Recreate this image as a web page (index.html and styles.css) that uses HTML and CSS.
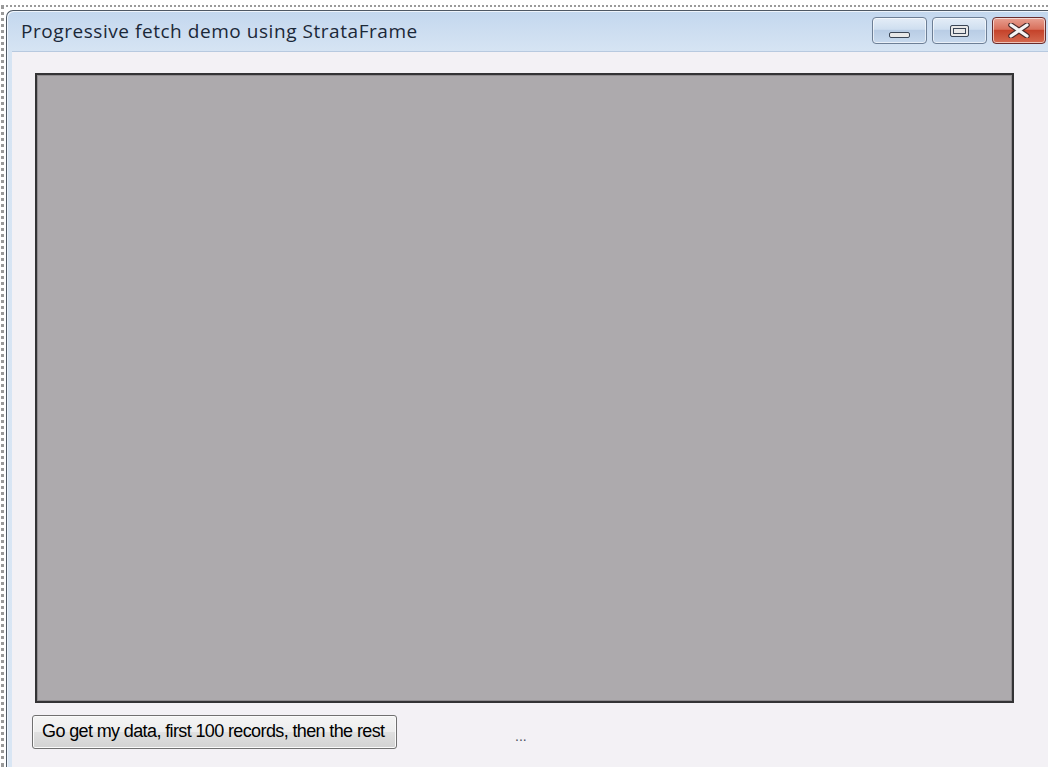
FILE: index.html
```html
<!DOCTYPE html>
<html>
<head>
<meta charset="utf-8">
<title>Progressive fetch demo using StrataFrame</title>
<link rel="stylesheet" href="styles.css">
</head>
<body>
<div class="page">
  <div class="selection">
    <div class="window">
      <div class="titlebar">
        <span class="title">Progressive fetch demo using StrataFrame</span>
        <div class="caption-buttons">
          <div class="cap-btn cap-min"><span class="glyph-min"></span></div>
          <div class="cap-btn cap-max"><span class="glyph-max"></span></div>
          <div class="cap-btn cap-close">
            <svg width="26" height="15" viewBox="0 0 26 15">
              <path d="M5 2 L21 13 M21 2 L5 13" stroke="#4a2a2a" stroke-width="5.5" stroke-linecap="round"/>
              <path d="M5 2 L21 13 M21 2 L5 13" stroke="#f4f4f4" stroke-width="3.2" stroke-linecap="round"/>
            </svg>
          </div>
        </div>
      </div>
      <div class="client">
        <div class="grid-panel"></div>
        <div class="actions">
          <button class="fetch-btn">Go get my data, first 100 records, then the rest</button>
          <span class="status">...</span>
        </div>
      </div>
    </div>
  </div>
</div>
</body>
</html>
```

FILE: styles.css
```css
html, body {
  margin: 0;
  padding: 0;
  background: #ffffff;
  overflow: hidden;
}

.page {
  width: 1048px;
  height: 767px;
  padding-top: 5px;
  box-sizing: border-box;
}

/* dotted focus rectangle around the captured window */
.selection {
  margin-left: 1px;
  height: 762px;
  box-sizing: border-box;
  border-top: 2px dotted #9a9a9a;
  border-left: 3px dotted #9a9a9a;
  padding: 3px 0 0 2px;
}

.window {
  height: 100%;
  box-sizing: border-box;
  border: 1px solid #4e5864;
  border-right: none;
  border-bottom: none;
  border-radius: 7px 0 0 0;
  background: linear-gradient(#c3d7ee, #d6e4f3 40px, #d9e6f4);
  padding: 0 0 0 5px;
  display: flex;
  flex-direction: column;
  box-shadow: inset 1px 1px 0 #eef4fb;
}

.titlebar {
  height: 40px;
  flex: none;
  display: flex;
  align-items: flex-start;
  justify-content: space-between;
}

.title {
  font-family: "Open Sans", "Noto Sans", sans-serif;
  font-size: 19px;
  color: #1b2838;
  margin: 7px 0 0 9px;
  letter-spacing: 0.55px;
}

.caption-buttons {
  display: flex;
  margin-top: 6px;
  margin-right: 2px;
}

.cap-btn {
  height: 27px;
  border: 1px solid #6d7f96;
  border-radius: 4px;
  box-sizing: border-box;
  display: flex;
  align-items: center;
  justify-content: center;
  box-shadow: inset 0 0 0 1px rgba(255,255,255,0.6);
}

.cap-min, .cap-max {
  width: 55px;
  background: linear-gradient(#e4edf7, #cfdff0 45%, #b9cde5 50%, #c8daee);
  margin-right: 5px;
}

.glyph-min {
  width: 19px;
  height: 4px;
  margin-top: 8px;
  border: 1px solid #3b4656;
  border-radius: 2px;
  background: #e8e8e8;
}

.glyph-max {
  width: 17px;
  height: 10px;
  border: 1px solid #3b4656;
  border-radius: 2px;
  background: #e8e8e8;
  box-shadow: inset 0 0 0 2px #e8e8e8, inset 0 0 0 3px #3b4656;
}

.cap-close {
  width: 54px;
  border-color: #6a2c2c;
  background: linear-gradient(#e8a091, #d8705c 45%, #c5432b 50%, #d46a50);
}

.client {
  flex: 1;
  background: #f3f1f5;
  border-top: 1px solid #b7c9df;
  padding: 21px 0 0 23px;
  display: flex;
  flex-direction: column;
}

.grid-panel {
  width: 979px;
  height: 630px;
  box-sizing: border-box;
  background: #adaaad;
  border: 2px solid #333335;
  box-shadow: inset 0 0 0 1px #8f8c8f;
}

.actions {
  display: flex;
  align-items: center;
  margin-top: 12px;
  margin-left: -3px;
}

.fetch-btn {
  width: 365px;
  height: 34px;
  box-sizing: border-box;
  border: 1px solid #707070;
  border-radius: 3px;
  background: linear-gradient(#f4f4f4, #ededed 50%, #e0e0e0 51%, #d2d2d2);
  box-shadow: inset 0 0 0 1px #fbfbfb;
  font-family: "Liberation Sans", Arial, sans-serif;
  font-size: 18px;
  letter-spacing: -0.62px;
  color: #000000;
  padding: 0 0 2px 9px;
  text-align: left;
}

.status {
  font-family: "Liberation Sans", Arial, sans-serif;
  font-size: 14px;
  color: #4a5060;
  margin-left: 118px;
  margin-top: 8px;
}
```
